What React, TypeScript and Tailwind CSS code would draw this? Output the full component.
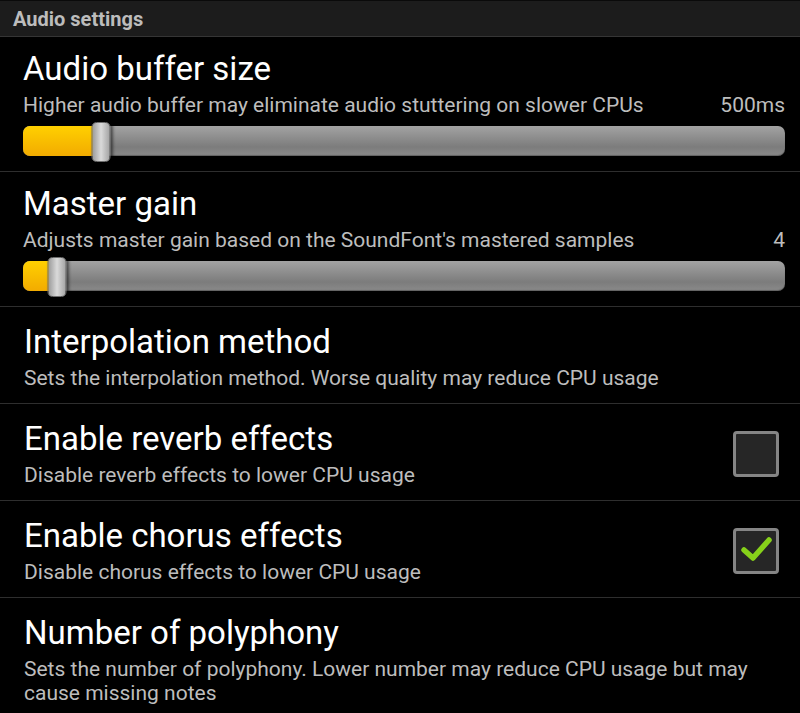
import React from 'react'

type SliderPref = {
    title: string
    summary: string
    value: string
    percent: number
}

type CheckPref = {
    title: string
    summary: string
    checked?: boolean
}

function Slider({ percent }: { percent: number }) {
    return (
        <div className="relative mt-[5px] h-[40px]">
            <div className="absolute left-0 right-0 top-[4px] h-[30px] rounded-[7px] bg-gradient-to-b from-[#a3a3a3] via-[#7c7c7c] via-70% to-[#8a8a8a] shadow-[inset_0_-1px_1px_rgba(0,0,0,0.3)]" />
            <div
                className="absolute left-0 top-[4px] h-[30px] rounded-l-[7px] bg-gradient-to-b from-[#ffd000] to-[#f2ab00]"
                style={{ width: `${percent}%` }}
            />
            <div
                className="absolute top-0 h-[40px] w-[19px] -translate-x-1/2 rounded-[5px] border border-[#6e6e6e] bg-gradient-to-r from-[#9c9c9c] via-[#dadada] to-[#a5a5a5] shadow-[2px_0_3px_rgba(0,0,0,0.5)]"
                style={{ left: `${percent}%` }}
            />
        </div>
    )
}

function SliderRow({ title, summary, value, percent }: SliderPref) {
    return (
        <div className="border-b border-[#2e2e2e] pl-[23px] pr-[15px] pt-[14px] pb-[9px]">
            <div className="text-[33px] leading-[36px] text-white">{title}</div>
            <div className="mt-[6px] flex items-start justify-between text-[21px] leading-[24px] text-[#bdbdbd]">
                <span>{summary}</span>
                <span>{value}</span>
            </div>
            <Slider percent={percent} />
        </div>
    )
}

function CheckBox({ checked }: { checked?: boolean }) {
    return (
        <div className="flex h-[46px] w-[46px] shrink-0 items-center justify-center rounded-[4px] border-[3px] border-[#858585] bg-[#262626]">
            {checked && (
                <svg width="40" height="40" viewBox="0 0 40 40">
                    <path d="M8 19 L17 27 L33 9" fill="none" stroke="#86d11a" strokeWidth="5.5" strokeLinecap="round" strokeLinejoin="round" />
                </svg>
            )}
        </div>
    )
}

function PrefRow({ title, summary, checked }: CheckPref) {
    return (
        <div className="flex items-center border-b border-[#2e2e2e] pl-[24px] pr-[21px] pt-[17px] pb-[13px]">
            <div className="flex-1">
                <div className="text-[33px] leading-[36px] text-white">{title}</div>
                <div className="mt-[6px] text-[21px] leading-[24px] text-[#bdbdbd]">{summary}</div>
            </div>
            {checked !== undefined && <CheckBox checked={checked} />}
        </div>
    )
}

export default function App() {
    return (
        <div className="h-[713px] w-[800px] overflow-hidden bg-black font-['Roboto',sans-serif]">
            <div className="h-[37px] border-t border-[#0a0a0a] border-b border-b-[#353535] bg-[#1c1c1c] px-[13px] text-[20px] font-bold leading-[36px] text-[#bcbcbc]">
                Audio settings
            </div>

            <SliderRow
                title="Audio buffer size"
                summary="Higher audio buffer may eliminate audio stuttering on slower CPUs"
                value="500ms"
                percent={10.2}
            />
            <SliderRow
                title="Master gain"
                summary="Adjusts master gain based on the SoundFont's mastered samples"
                value="4"
                percent={4.4}
            />

            <PrefRow
                title="Interpolation method"
                summary="Sets the interpolation method. Worse quality may reduce CPU usage"
            />
            <PrefRow
                title="Enable reverb effects"
                summary="Disable reverb effects to lower CPU usage"
                checked={false}
            />
            <PrefRow
                title="Enable chorus effects"
                summary="Disable chorus effects to lower CPU usage"
                checked={true}
            />
            <PrefRow
                title="Number of polyphony"
                summary="Sets the number of polyphony. Lower number may reduce CPU usage but may cause missing notes"
            />
        </div>
    )
}
